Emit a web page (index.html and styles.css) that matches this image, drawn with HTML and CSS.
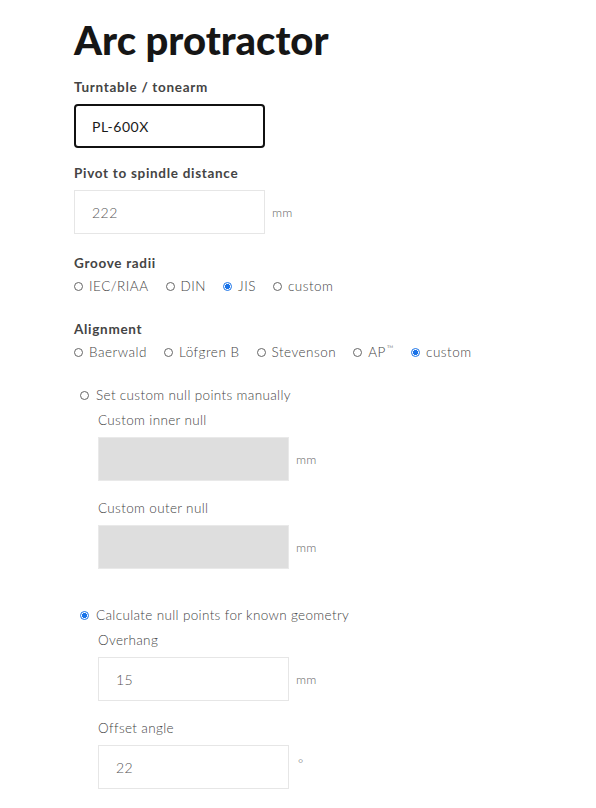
FILE: index.html
```html
<!DOCTYPE html>
<html>
<head>
<meta charset="utf-8">
<link rel="stylesheet" href="styles.css">
</head>
<body>
<main class="page">
  <h1 class="title">Arc protractor</h1>

  <div class="field">
    <div class="label">Turntable / tonearm</div>
    <div class="row">
      <div class="input focused">PL-600X</div>
    </div>
  </div>

  <div class="field">
    <div class="label">Pivot to spindle distance</div>
    <div class="row">
      <div class="input">222</div>
      <span class="unit">mm</span>
    </div>
  </div>

  <div class="field groove">
    <div class="label">Groove radii</div>
    <div class="radios">
      <label class="radio"><span class="dot"></span>IEC/RIAA</label>
      <label class="radio"><span class="dot"></span>DIN</label>
      <label class="radio"><span class="dot on"></span>JIS</label>
      <label class="radio"><span class="dot"></span>custom</label>
    </div>
  </div>

  <div class="field align">
    <div class="label">Alignment</div>
    <div class="radios">
      <label class="radio"><span class="dot"></span>Baerwald</label>
      <label class="radio"><span class="dot"></span>Löfgren B</label>
      <label class="radio"><span class="dot"></span>Stevenson</label>
      <label class="radio"><span class="dot"></span><span>AP<sup class="tm">™</sup></span></label>
      <label class="radio"><span class="dot on"></span>custom</label>
    </div>
  </div>

  <section class="sub">
    <label class="radio"><span class="dot"></span>Set custom null points manually</label>
    <div class="subfields">
      <div class="sublabel">Custom inner null</div>
      <div class="row">
        <div class="input disabled"></div>
        <span class="unit">mm</span>
      </div>
      <div class="sublabel">Custom outer null</div>
      <div class="row">
        <div class="input disabled"></div>
        <span class="unit">mm</span>
      </div>
    </div>
  </section>

  <section class="sub second">
    <label class="radio"><span class="dot on"></span>Calculate null points for known geometry</label>
    <div class="subfields">
      <div class="sublabel">Overhang</div>
      <div class="row">
        <div class="input">15</div>
        <span class="unit">mm</span>
      </div>
      <div class="sublabel">Offset angle</div>
      <div class="row">
        <div class="input">22</div>
        <span class="unit deg">°</span>
      </div>
    </div>
  </section>
</main>
</body>
</html>
```

FILE: styles.css
```css
html, body {
  margin: 0;
  padding: 0;
  background: #fff;
}
body {
  font-family: Lato, "DejaVu Sans", sans-serif;
  color: #555;
}
.page {
  padding: 18px 0 0 74px;
}
.title {
  margin: 0;
  font-size: 40px;
  font-weight: 900;
  color: #161616;
  line-height: 44px;
  letter-spacing: 0;
}
.field {
  margin-top: 16px;
}
.field.groove {
  margin-top: 20px;
}
.field.align {
  margin-top: 25px;
}
.label {
  font-size: 13.5px;
  font-weight: 700;
  color: #444;
  line-height: 18px;
  letter-spacing: 0.7px;
  margin-bottom: 8px;
}
.row {
  display: flex;
  align-items: center;
  gap: 7px;
}
.input {
  box-sizing: border-box;
  width: 191px;
  height: 44px;
  border: 1px solid #e6e6e6;
  padding: 0 17px;
  display: flex;
  align-items: center;
  font-size: 14px;
  font-weight: 300;
  color: #555;
  letter-spacing: 0.5px;
}
.input.focused {
  border: 2px solid #111;
  border-radius: 4px;
  padding-left: 16px;
  color: #1a1a1a;
  font-weight: 400;
}
.input.disabled {
  background: #dedede;
  border-color: #e9e9e9;
}
.unit {
  font-size: 12.5px;
  font-weight: 300;
  color: #666;
  letter-spacing: 0.3px;
}
.unit.deg {
  align-self: flex-start;
  margin-top: 11px;
  margin-left: 2px;
}
.radios {
  display: flex;
  gap: 17px;
  margin-top: -3px;
}
.radio {
  display: flex;
  align-items: center;
  gap: 6px;
  font-size: 13.5px;
  font-weight: 300;
  color: #444;
  letter-spacing: 0.5px;
  line-height: 18px;
}
.tm {
  font-size: 9px;
  line-height: 0;
  vertical-align: 5px;
  margin-left: 1px;
}
.dot {
  box-sizing: border-box;
  width: 9px;
  height: 9px;
  border-radius: 50%;
  border: 1px solid #666;
  flex: none;
}
.dot.on {
  border: 1px solid #1a73e8;
  background: radial-gradient(circle, #1a73e8 0 2.4px, #fff 2.8px);
}
.sub {
  margin-top: 25px;
  padding-left: 6px;
}
.sub .radio {
  font-size: 13.5px;
  letter-spacing: 0.35px;
  gap: 7px;
}
.sub.second {
  margin-top: 37px;
}
.subfields {
  padding-left: 18px;
}
.sublabel {
  font-size: 13.5px;
  font-weight: 300;
  color: #444;
  letter-spacing: 0.35px;
  line-height: 18px;
  margin: 7px 0 8px;
}
.subfields .row + .sublabel {
  margin-top: 18px;
}
```
